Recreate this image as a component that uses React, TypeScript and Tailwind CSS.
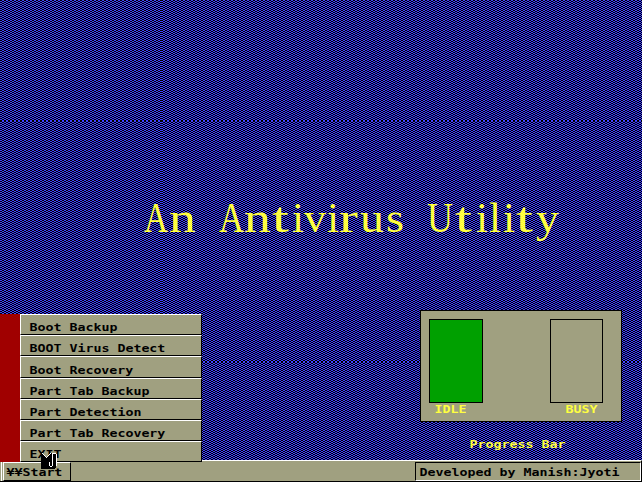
import React from "react";

const menu = [
  { label: "Boot Backup", row: "h-[21px] pt-[6px]" },
  { label: "BOOT Virus Detect", row: "h-[21px] pt-[6px]" },
  { label: "Boot Recovery", row: "h-[22px] pt-[7px]" },
  { label: "Part Tab Backup", row: "h-[21px] pt-[6px]" },
  { label: "Part Detection", row: "h-[21px] pt-[6px]" },
  { label: "Part Tab Recovery", row: "h-[21px] pt-[6px]" },
  { label: "EXIT", row: "h-[21px] pt-[6px]" },
];

// Each title letter with its left edge and advance.
const title: [string, number, number][] = [
  ["A", 144, 24], ["n", 169, 27], [" ", 196, 20],
  ["A", 219, 25], ["n", 244, 27], ["t", 272, 17], ["i", 292, 12], ["v", 304, 22], ["i", 327, 12], ["r", 339, 19], ["u", 360, 24], ["s", 386, 18], [" ", 405, 20],
  ["U", 427, 26], ["t", 455, 17], ["i", 476, 12], ["l", 489, 12], ["i", 503, 12], ["t", 516, 17], ["y", 536, 23],
];

// Eight-pixel-pitch screen text; the baseline is 10px below the top of its box.
function Label({ children, color = "#000000" }: { children: string; color?: string }) {
  const w = children.length * 8;
  return (
    <svg width={w} height="13" className="block shrink-0 overflow-visible">
      <text x="0.4" y="10.3" textLength={w} lengthAdjust="spacingAndGlyphs" fontFamily="'DejaVu Sans Mono', monospace" fontWeight="bold" fontSize="10" fill={color}>{children}</text>
    </svg>
  );
}

function Backdrop() {
  return (
    <svg className="absolute inset-0" width="642" height="482" shapeRendering="crispEdges">
      <defs>
        <pattern id="a" y="1" width="4" height="2" patternUnits="userSpaceOnUse"><path d="M0 0h2v1h-2zM2 1h2v1h-2z" fill="#4040ff" /></pattern>
        <pattern id="b" x="1" y="1" width="4" height="2" patternUnits="userSpaceOnUse"><path d="M0 0h2v1h-2zM2 1h2v1h-2z" fill="#4040ff" /></pattern>
        <pattern id="c" width="4" height="2" patternUnits="userSpaceOnUse"><path d="M0 0h2v1h-2zM2 1h2v1h-2z" fill="#4040ff" /></pattern>
        <pattern id="d" x="1" width="4" height="2" patternUnits="userSpaceOnUse"><path d="M0 0h2v1h-2zM2 1h2v1h-2z" fill="#4040ff" /></pattern>
      </defs>
      <rect width="161" height="121" fill="url(#a)" />
      <rect x="161" width="481" height="121" fill="url(#b)" />
      <rect y="121" width="161" height="241" fill="url(#c)" />
      <rect x="161" y="121" width="481" height="241" fill="url(#d)" />
      <rect y="362" width="161" height="120" fill="url(#a)" />
      <rect x="161" y="362" width="481" height="120" fill="url(#b)" />
    </svg>
  );
}

export default function App() {
  return (
    <div className="relative flex h-[482px] w-[642px] flex-col overflow-hidden bg-black">
      <Backdrop />
      <main className="relative h-[460px] shrink-0">
        <svg className="block h-[300px] w-full">
          <text y="232" fontFamily="'Liberation Serif', serif" fontSize="43" fill="#ffff40" xmlSpace="preserve">
            {title.map(([c, x, w], i) => <tspan key={i} x={x} textLength={w} lengthAdjust="spacingAndGlyphs">{c}</tspan>)}
          </text>
        </svg>
        <div className="ml-[420px] mt-[10px] flex h-[112px] w-[202px] justify-between border border-black bg-[#a0a080] pl-2 pr-[18px] pt-2">
          <div className="w-[54px]">
            <div className="h-[84px] border border-black bg-[#00a000]" />
            <div className="pl-[5px]"><Label color="#ffff40">IDLE</Label></div>
          </div>
          <div className="w-[53px]">
            <div className="h-[84px] border border-black" />
            <div className="pl-[15px]"><Label color="#ffff40">BUSY</Label></div>
          </div>
        </div>
        <div className="pl-[469px] pt-[16px]"><Label color="#ffff40">Progress Bar</Label></div>
      </main>
      <footer className="relative flex h-[22px] shrink-0 justify-between border-b border-r border-t border-b-black border-r-black border-t-white bg-[#a0a080]">
        <div className="flex pl-px">
          <div className="h-5 w-px bg-white" />
          <div className="ml-px mt-px h-[19px] w-[68px] border border-b-black border-l-white border-r-black border-t-white pl-[2px] pt-[3px]"><Label>¥¥Start</Label></div>
        </div>
        <div className="mt-px h-[19px] w-[226px] border border-b-white border-l-black border-r-white border-t-black pl-[3px] pt-[3px]"><Label>Developed by Manish:Jyoti</Label></div>
      </footer>
      <nav className="absolute left-0 top-[314px] h-[148px] w-[202px] bg-[#a00000] pl-5">
        {menu.map(({ label, row }) => (
          <div key={label} className={`border border-b-black border-l-white border-r-black border-t-white bg-[#a0a080] pl-2 ${row}`}><Label>{label}</Label></div>
        ))}
      </nav>
      <svg className="absolute left-[41px] top-[452px]" width="17" height="17" shapeRendering="crispEdges">
        <path d="M0 1h2v1h1v1h1v1h1v1h2v-1h1v-1h1v-1h1v-1h5v15h-1v1h-14z" fill="#000" />
        <path d="M1 1h1v1h1v1h1v1h1v1h1v-1h1v-1h1v-1h1v-1h1v1h-1v1h-1v1h-1v1h-1v1h-1v-1h-1v-1h-1v-1h-1v-1h-1zM11 1h1v13h-1zM8 10h1v4h-1zM12 1h3v1h-3zM15 2h1v12h-1zM9 14h2v1h-2z" fill="#fff" />
      </svg>
    </div>
  );
}
